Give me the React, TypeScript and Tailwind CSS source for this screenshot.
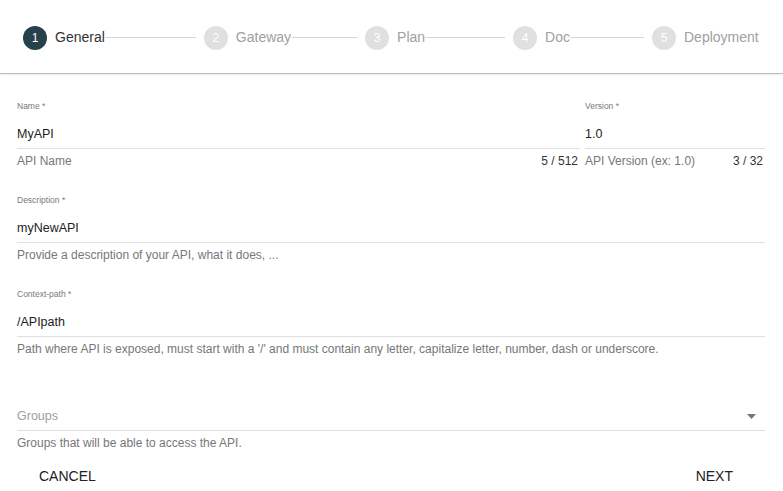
import React from "react";

const STEPS = [
  { n: 1, label: "General", line: 91 },
  { n: 2, label: "Gateway", line: 66 },
  { n: 3, label: "Plan", line: 80 },
  { n: 4, label: "Doc", line: 74 },
  { n: 5, label: "Deployment", line: 0 },
];

function Stepper() {
  return (
    <div className="flex h-[74px] items-center border-b border-[#bdbdbd] pl-[23px] pt-[2px] shadow-[0_1px_2px_rgba(0,0,0,0.08)]">
      {STEPS.map((s, i) => {
        const active = i === 0;
        return (
          <div key={s.n} className="flex items-center">
            <span
              className={
                "flex h-6 w-6 items-center justify-center rounded-full text-[12px] text-white " +
                (active ? "bg-[#26404c]" : "bg-[#e0e0e0]")
              }
            >
              {s.n}
            </span>
            <span className={"ml-2 text-[14px] " + (active ? "text-[#333]" : "text-[#a0a0a0]")}>{s.label}</span>
            {s.line > 0 && (
              <span className="mr-2 h-px bg-[#d6d6d6]" style={{ width: s.line }} />
            )}
          </div>
        );
      })}
    </div>
  );
}

function Field({
  label,
  value,
  helper,
  counter,
  className = "",
}: {
  label: string;
  value: string;
  helper: string;
  counter?: string;
  className?: string;
}) {
  return (
    <div className={className}>
      <div className="h-3 pt-px text-[8.5px] leading-3 text-[#7a7a7a]">{label}</div>
      <div className="mt-3 border-b border-[#e0e0e0] pb-[4px] pt-px text-[12.5px] leading-5 text-[#222]">{value}</div>
      <div className="mt-[3px] flex h-4 justify-between pt-px text-[12px] leading-4 text-[#777]">
        <span>{helper}</span>
        {counter && <span className="pr-[2px] text-[#333]">{counter}</span>}
      </div>
    </div>
  );
}

export default function App() {
  return (
    <div className="h-[491px] w-[783px] overflow-hidden bg-white font-['Liberation_Sans',Arial,sans-serif]">
      <Stepper />
      <div className="pl-[17px] pr-[18px] pt-[25px]">
        <div className="flex gap-[5px]">
          <Field className="flex-1" label="Name *" value="MyAPI" helper="API Name" counter="5 / 512" />
          <Field className="w-[180px]" label="Version *" value="1.0" helper="API Version (ex: 1.0)" counter="3 / 32" />
        </div>
        <Field
          className="mt-[25px]"
          label="Description *"
          value="myNewAPI"
          helper="Provide a description of your API, what it does, ..."
        />
        <Field
          className="mt-[25px]"
          label="Context-path *"
          value="/APIpath"
          helper="Path where API is exposed, must start with a '/' and must contain any letter, capitalize letter, number, dash or underscore."
        />

        {/* Groups select */}
        <div className="mt-[49px]">
          <div className="flex items-center justify-between border-b border-[#e0e0e0] pb-[4px] pt-px text-[12.5px] leading-5 text-[#9e9e9e]">
            <span>Groups</span>
            <svg width="9" height="5" viewBox="0 0 9 5" className="mr-[9px]">
              <path d="M0 0 L9 0 L4.5 5Z" fill="#757575" />
            </svg>
          </div>
          <div className="mt-[3px] h-4 pt-px text-[12px] leading-4 text-[#777]">Groups that will be able to access the API.</div>
        </div>
      </div>

      <div className="mt-[9px] flex justify-between pl-[23px] pr-[34px] pt-px">
        <button className="px-4 py-[6px] text-[14px] leading-5 text-[#222]">CANCEL</button>
        <button className="px-4 py-[6px] text-[14px] leading-5 text-[#222]">NEXT</button>
      </div>
    </div>
  );
}
